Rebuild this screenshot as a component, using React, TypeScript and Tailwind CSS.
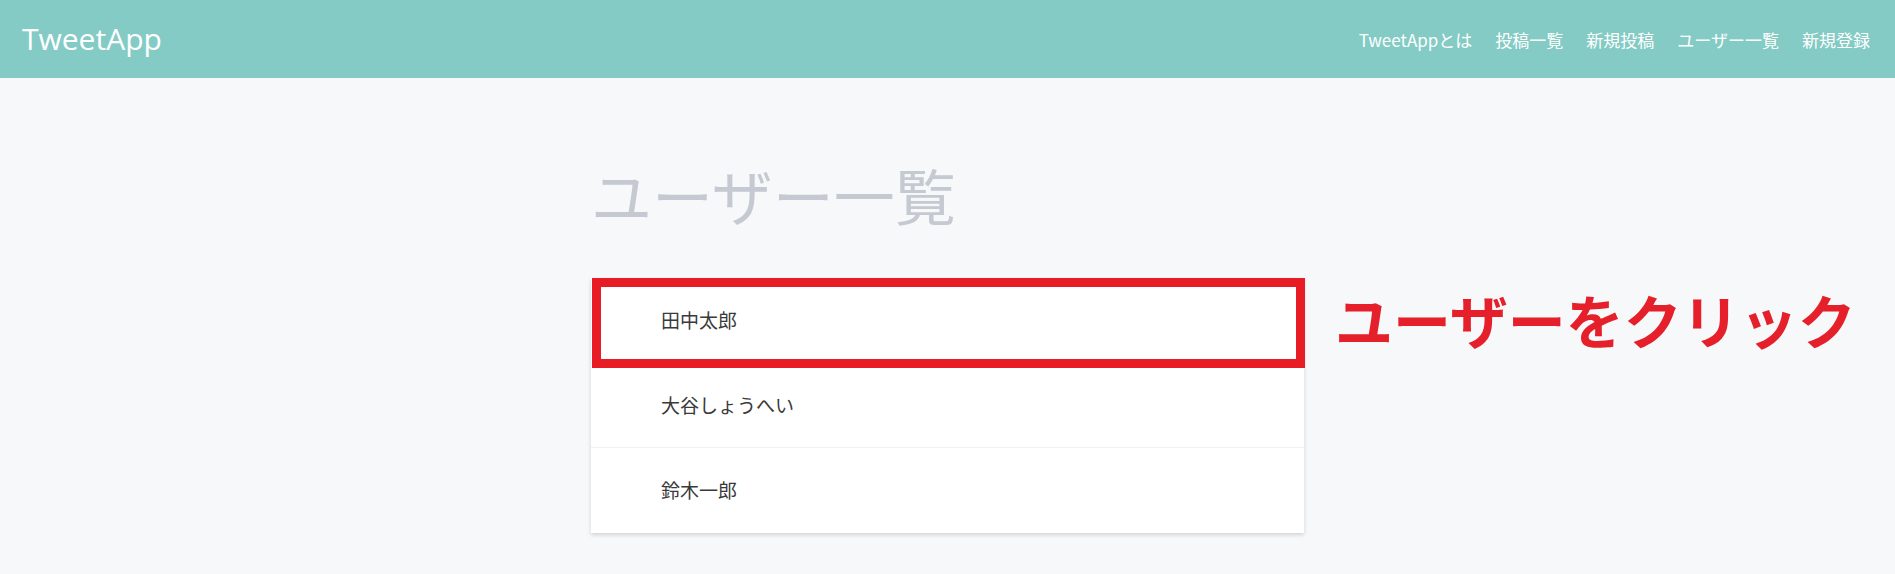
const users = ["田中太郎", "大谷しょうへい", "鈴木一郎"];
const navItems = ["TweetAppとは", "投稿一覧", "新規投稿", "ユーザー一覧", "新規登録"];

const jp = "font-['Noto_Sans_CJK_JP',sans-serif]";

export default function App() {
  return (
    <div className={`min-h-[574px] bg-[#f6f8fa] ${jp}`}>
      <header className="flex h-[78px] items-center justify-between bg-[#83cbc4] pl-[22px] pr-[25px] text-white">
        <div className="font-['Open_Sans',sans-serif] text-[30px] leading-none">TweetApp</div>
        <nav className="flex gap-[23px] text-[17px] leading-none">
          {navItems.map(item => (
            <a key={item} href="#" className="text-white">
              {item}
            </a>
          ))}
        </nav>
      </header>

      <main className="mx-auto w-[713px] pt-[86px]">
        <h1 className="text-[61px] leading-none font-normal text-[#c5c9d2]">ユーザー一覧</h1>

        <div className="relative mt-[53px]">
          <div className="bg-white shadow-[0_2px_4px_rgba(0,0,0,0.15)]">
            {users.map((name, i) => (
              <div
                key={name}
                className={`flex h-[85px] items-center pl-[70px] text-[19px] text-[#3a3a3a] ${
                  i < users.length - 1 ? "border-b border-[#f1f1f1]" : ""
                }`}
              >
                {name}
              </div>
            ))}
          </div>

          {/* annotation overlay */}
          <div className="pointer-events-none absolute top-0 left-[1px] h-[90px] w-[713px] border-[9px] border-[#e81c24]" />
          <div className="absolute top-[12px] left-[744px] text-[58px] leading-none font-bold whitespace-nowrap text-[#e5202a]">
            ユーザーをクリック
          </div>
        </div>
      </main>
    </div>
  );
}
